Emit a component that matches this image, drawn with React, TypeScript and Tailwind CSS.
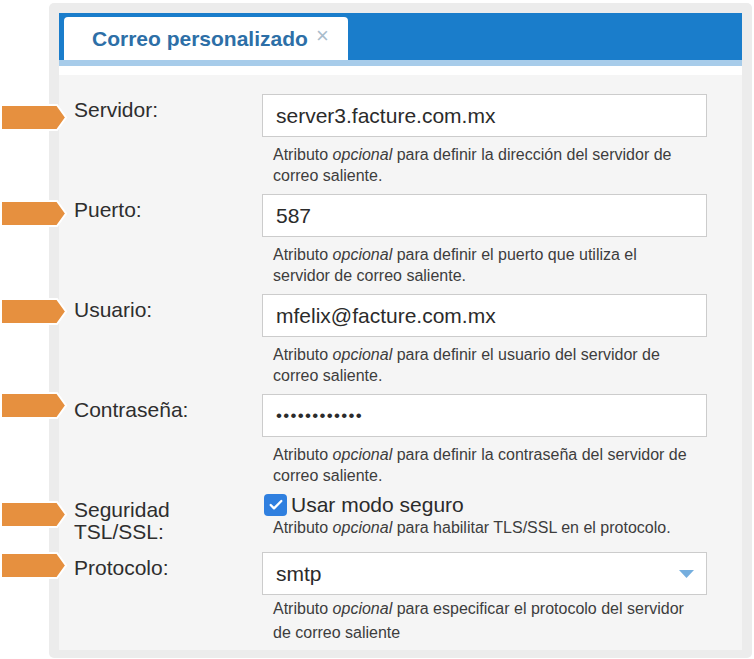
import { Check } from "lucide-react";

const arrowTops = [104, 200, 298, 392, 501, 552];

function Arrow({ top }: { top: number }) {
  return (
    <svg
      className="absolute left-0"
      style={{ top }}
      width="70"
      height="28"
      viewBox="0 0 70 28"
    >
      <polygon
        points="1,1 57,1 66,13.5 57,26 1,26"
        fill="#e6903f"
        stroke="#ffffff"
        strokeWidth="2"
      />
    </svg>
  );
}

function Help({ lines, className = "mt-[7px]" }: { lines: string[][]; className?: string }) {
  return (
    <div className={`${className} whitespace-nowrap pl-[11px] text-[16px] leading-[21px] text-[#3d3d3d]`}>
      {lines.map((parts, i) => (
        <div key={i}>
          {parts.map((p, j) =>
            p === "opcional" ? (
              <i key={j}>opcional</i>
            ) : (
              <span key={j}>{p}</span>
            )
          )}
        </div>
      ))}
    </div>
  );
}

function Field({
  label,
  value,
  help,
}: {
  label: string;
  value: React.ReactNode;
  help: string[][];
}) {
  return (
    <div className="mb-[8px] flex">
      <div className="w-[188px] pt-[5px] text-[21px] leading-[22px] text-[#2e2e2e]">{label}</div>
      <div className="w-[445px]">
        <div className="flex h-[43px] items-center border border-[#cccccc] bg-white px-[13px] text-[21px] text-[#2b2b2b]">
          {value}
        </div>
        <Help lines={help} />
      </div>
    </div>
  );
}

export default function App() {
  return (
    <div className="relative min-h-[659px] bg-white font-['Liberation_Sans',Arial,sans-serif]">
      <div className="pl-[49px] pt-[3px]">
        <div className="h-[655px] w-[703px] rounded-[5px] bg-[#ececec] px-[10px] pt-[10px]">
          {/* header with tab */}
          <div className="flex h-[47px] items-end bg-[#1a7dcb] pl-[5px]">
            <div className="flex h-[43px] w-[284px] items-center rounded-t-[4px] bg-white pl-[28px]">
              <span className="text-[21px] font-bold text-[#2d6fa7]">Correo personalizado</span>
              <span className="mb-[6px] ml-[8px] text-[22px] leading-none text-[#a9bccc]">×</span>
            </div>
          </div>
          <div className="h-[6px] bg-[#a7ccea]" />
          <div className="h-[9px] bg-white" />

          {/* form */}
          <div className="h-[575px] bg-[#f5f5f5] pl-[15px] pt-[19px]">
            <Field
              label="Servidor:"
              value="server3.facture.com.mx"
              help={[
                ["Atributo ", "opcional", " para definir la dirección del servidor de"],
                ["correo saliente."],
              ]}
            />
            <Field
              label="Puerto:"
              value="587"
              help={[
                ["Atributo ", "opcional", " para definir el puerto que utiliza el"],
                ["servidor de correo saliente."],
              ]}
            />
            <Field
              label="Usuario:"
              value="mfelix@facture.com.mx"
              help={[
                ["Atributo ", "opcional", " para definir el usuario del servidor de"],
                ["correo saliente."],
              ]}
            />
            <Field
              label="Contraseña:"
              value={<span className="text-[17px] tracking-[1.3px]">••••••••••••</span>}
              help={[
                ["Atributo ", "opcional", " para definir la contraseña del servidor de"],
                ["correo saliente."],
              ]}
            />

            <div className="mb-[9px] flex">
              <div className="w-[188px] pt-[5px] text-[21px] leading-[22px] text-[#2e2e2e]">
                Seguridad
                <br />
                TSL/SSL:
              </div>
              <div className="w-[445px]">
                <div className="flex h-[22px] items-center pl-[2px]">
                  <div className="flex h-[22px] w-[23px] items-center justify-center rounded-[4px] bg-[#2f7fdf]">
                    <Check className="h-[16px] w-[16px] text-white" strokeWidth={3.5} />
                  </div>
                  <span className="ml-[4px] text-[21px] leading-[22px] text-[#2b2b2b]">Usar modo seguro</span>
                </div>
                <Help
                  className="mt-[1px]"
                  lines={[["Atributo ", "opcional", " para habilitar TLS/SSL en el protocolo."]]}
                />
              </div>
            </div>

            <div className="flex">
              <div className="w-[188px] pt-[5px] text-[21px] leading-[22px] text-[#2e2e2e]">Protocolo:</div>
              <div className="w-[445px]">
                <div className="flex h-[43px] items-center justify-between border border-[#cccccc] bg-white pl-[13px] pr-[12px] text-[21px] text-[#2b2b2b]">
                  <span>smtp</span>
                  <svg width="15" height="8" viewBox="0 0 15 8">
                    <polygon points="0,0 15,0 7.5,8" fill="#75aede" />
                  </svg>
                </div>
                <div className="mt-[2px] whitespace-nowrap pl-[11px] text-[16px] leading-[24px] text-[#3d3d3d]">
                  <div>
                    Atributo <i>opcional</i> para especificar el protocolo del servidor
                  </div>
                  <div>de correo saliente</div>
                </div>
              </div>
            </div>
          </div>
        </div>
      </div>

      {arrowTops.map((t) => (
        <Arrow key={t} top={t} />
      ))}
    </div>
  );
}
